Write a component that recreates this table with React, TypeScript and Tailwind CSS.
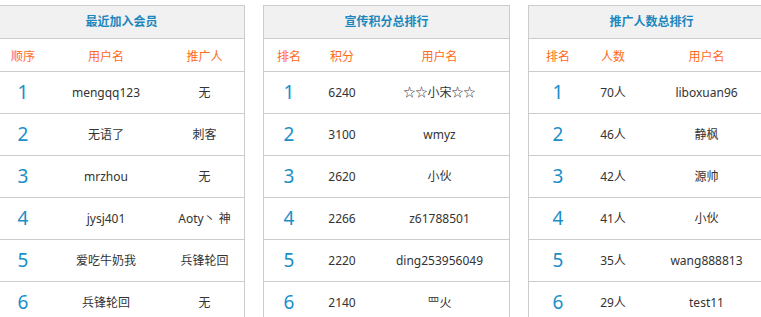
import React from 'react';

type Col = { label: string; width: string };

const PANELS: { title: string; cols: Col[]; rows: string[][] }[] = [
  {
    title: '最近加入会员',
    cols: [
      { label: '顺序', width: 'w-[48px]' },
      { label: '用户名', width: 'w-[118px]' },
      { label: '推广人', width: 'flex-1' },
    ],
    rows: [
      ['mengqq123', '无'],
      ['无语了', '刺客'],
      ['mrzhou', '无'],
      ['jysj401', 'Aoty丶 神'],
      ['爱吃牛奶我', '兵锋轮回'],
      ['兵锋轮回', '无'],
    ],
  },
  {
    title: '宣传积分总排行',
    cols: [
      { label: '排名', width: 'w-[50px]' },
      { label: '积分', width: 'w-[56px]' },
      { label: '用户名', width: 'flex-1' },
    ],
    rows: [
      ['6240', '☆☆小宋☆☆'],
      ['3100', 'wmyz'],
      ['2620', '小伙'],
      ['2266', 'z61788501'],
      ['2220', 'ding253956049'],
      ['2140', '罒火'],
    ],
  },
  {
    title: '推广人数总排行',
    cols: [
      { label: '排名', width: 'w-[58px]' },
      { label: '人数', width: 'w-[52px]' },
      { label: '用户名', width: 'flex-1' },
    ],
    rows: [
      ['70人', 'liboxuan96'],
      ['46人', '静枫'],
      ['42人', '源帅'],
      ['41人', '小伙'],
      ['35人', 'wang888813'],
      ['29人', 'test11'],
    ],
  },
];

function Panel({ title, cols, rows }: (typeof PANELS)[number]) {
  return (
    <div className="w-[247px] shrink-0 border border-[#cccccc] bg-white">
      {/* title bar */}
      <div className="h-[33px] border-b border-[#cccccc] bg-[#f1f1f1] flex items-center justify-center text-[12px] font-bold text-[#1b87bd]">
        {title}
      </div>
      {/* column heads */}
      <div className="h-[33px] border-b border-[#cccccc] flex items-center pt-[3px] text-[12px] text-[#ff6a1a]">
        {cols.map((c) => (
          <div key={c.label} className={`${c.width} text-center`}>
            {c.label}
          </div>
        ))}
      </div>
      {rows.map((r, idx) => (
        <div key={idx} className="h-[42px] border-b border-[#cccccc] flex items-center text-[12px] text-[#333333]">
          <div className={`${cols[0].width} text-center text-[19px] text-[#1a8fc8]`}>{idx + 1}</div>
          <div className={`${cols[1].width} text-center`}>{r[0]}</div>
          <div className={`${cols[2].width} text-center`}>{r[1]}</div>
        </div>
      ))}
    </div>
  );
}

export default function App() {
  return (
    <div
      className="w-[761px] h-[317px] overflow-hidden bg-white pt-[5px]"
      style={{ fontFamily: '"Noto Sans", "Noto Sans CJK SC", sans-serif' }}
    >
      <div className="flex gap-[18px] ml-[-2px]">
        {PANELS.map((p) => (
          <Panel key={p.title} {...p} />
        ))}
      </div>
    </div>
  );
}
